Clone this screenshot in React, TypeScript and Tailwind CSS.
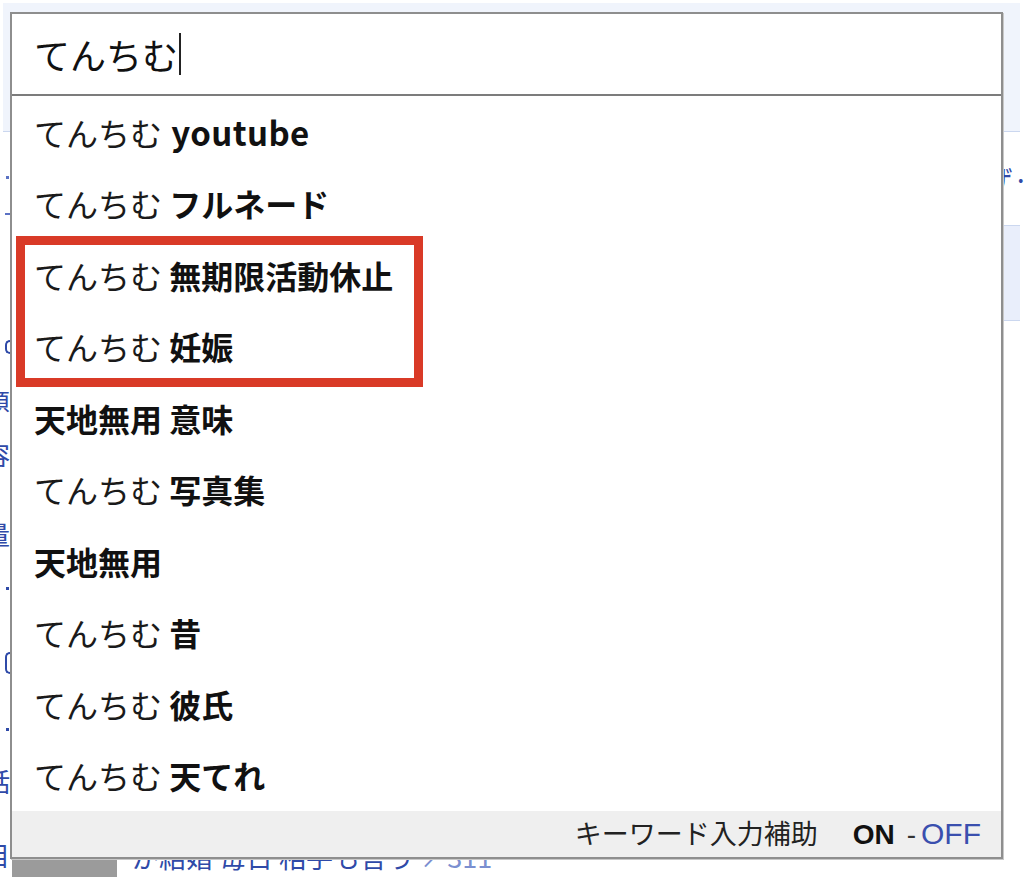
import React from "react";

const rows: { pre: string; bold: string; latin?: boolean }[] = [
  { pre: "てんちむ", bold: "youtube", latin: true },
  { pre: "てんちむ", bold: "フルネード" },
  { pre: "てんちむ", bold: "無期限活動休止" },
  { pre: "てんちむ", bold: "妊娠" },
  { pre: "", bold: "天地無用 意味" },
  { pre: "てんちむ", bold: "写真集" },
  { pre: "", bold: "天地無用" },
  { pre: "てんちむ", bold: "昔" },
  { pre: "てんちむ", bold: "彼氏" },
  { pre: "てんちむ", bold: "天てれ" },
];

function Glyph({ ch, cls }: { ch: string; cls: string }) {
  return (
    <div className={`w-[10px] overflow-hidden flex justify-end text-[26px] text-[#2f4aa8] ${cls}`}>
      <span className="shrink-0">{ch}</span>
    </div>
  );
}

export default function App() {
  return (
    <div className="relative w-[1024px] h-[877px] overflow-hidden bg-white font-['Noto_Sans_CJK_JP','Noto_Sans',sans-serif] text-[#111]">
      {/* background page */}
      <div className="flex flex-col h-full">
        <div className="h-[3px] shrink-0" />
        <div className="mx-[3px] mr-[4px] h-[129px] shrink-0 bg-[#f0f4fc] border-b border-[#cbd7ef]" />
        <div className="flex flex-1 min-h-0">
          {/* left fragments */}
          <div className="w-[10px] shrink-0 flex flex-col">
            <div className="mt-[44px] h-[3px] w-[3px] ml-[6px] bg-[#5b72c4]" />
            <div className="mt-[34px] h-[2px] w-[5px] ml-[5px] bg-[#5b72c4]" />
            <div className="mt-[125px] h-[14px] w-[5px] ml-[5px] rounded-l-full border-2 border-r-0 border-[#2f4aa8]" />
            <Glyph ch="題" cls="mt-[36px] h-[23px] leading-[23px]" />
            <Glyph ch="容" cls="mt-[27px] h-[27px] leading-[27px]" />
            <Glyph ch="量" cls="mt-[53px] h-[27px] leading-[27px]" />
            <div className="mt-[40px] h-[3px] w-[3px] ml-[6px] bg-[#2f4aa8]" />
            <div className="mt-[62px] h-[22px] w-[5px] ml-[5px] rounded-l-full border-2 border-r-0 border-[#2f4aa8]" />
            <div className="mt-[54px] h-[3px] w-[3px] ml-[6px] bg-[#2f4aa8]" />
            <Glyph ch="話" cls="mt-[36px] h-[27px] leading-[27px]" />
            <Glyph ch="目" cls="mt-[46px] h-[30px] leading-[30px]" />
          </div>
          {/* middle */}
          <div className="flex-1 flex flex-col justify-end">
            <div className="h-[35px] flex items-start overflow-hidden">
              <div className="ml-[2px] mt-[16px] w-[105px] h-[19px] bg-[#9b9b9b] shrink-0" />
              <div className="ml-[15px] text-[27px] leading-[30px] whitespace-nowrap text-[#2f4aa8]">
                が結婚 毎日 相手も言う <span className="text-[#7b8fd0]">↗311</span>
              </div>
            </div>
          </div>
          {/* right */}
          <div className="w-[21px] shrink-0 flex flex-col">
            <div className="h-[93px] flex items-center">
              <span className="ml-[-18px] whitespace-nowrap text-[28px] text-[#2f4aa8]">ザ·</span>
            </div>
            <div className="h-[96px] mr-[4px] bg-[#e9eefb] border-y border-[#cbd7ef]" />
          </div>
        </div>
      </div>

      {/* suggest dropdown */}
      <div className="absolute left-[10px] top-[12px] w-[993px] h-[847px] border-2 border-[#8e8e8e] bg-white flex flex-col shadow-[1px_1px_0_#c8c8c8]">
        <div className="h-[82px] shrink-0 border-b-2 border-[#7c7c7c] flex items-center pl-[22px]">
          <span className="text-[36px] leading-none text-[#111]">てんちむ</span>
          <span className="ml-[1px] w-[2px] h-[42px] bg-[#222]" />
        </div>
        <ul className="flex flex-col">
          {rows.map((r, i) => (
            <li key={i} className="h-[71.5px] flex items-center pl-[22px] whitespace-pre">
              <span className="text-[32px] leading-[40px]">
                {r.pre ? <span className="text-[#1a1a1a]">{r.pre} </span> : null}
                <span
                  className={
                    r.latin
                      ? "font-bold text-[#111] text-[33px] ml-[2px] tracking-[0.4px]"
                      : "font-bold text-[#111]"
                  }
                >
                  {r.bold}
                </span>
              </span>
            </li>
          ))}
        </ul>
        <div className="mt-auto h-[46px] bg-[#efefef] flex items-center justify-end pr-[20px]">
          <span className="text-[27px] leading-[30px]">
            <span className="text-[#222]">キーワード入力補助</span>
            <span className="ml-[35px] font-['Liberation_Sans','Noto_Sans',sans-serif] text-[28px] font-bold text-[#111]">ON</span>
            <span className="ml-[12px] font-['Liberation_Sans','Noto_Sans',sans-serif] text-[28px] text-[#333]">-</span>
            <span className="ml-[5px] font-['Liberation_Sans','Noto_Sans',sans-serif] text-[30px] text-[#3a4fae]">OFF</span>
          </span>
        </div>
      </div>

      {/* red annotation box */}
      <div className="absolute left-[16px] top-[236px] w-[407px] h-[151px] border-[9px] border-[#d93a27]" />
    </div>
  );
}
